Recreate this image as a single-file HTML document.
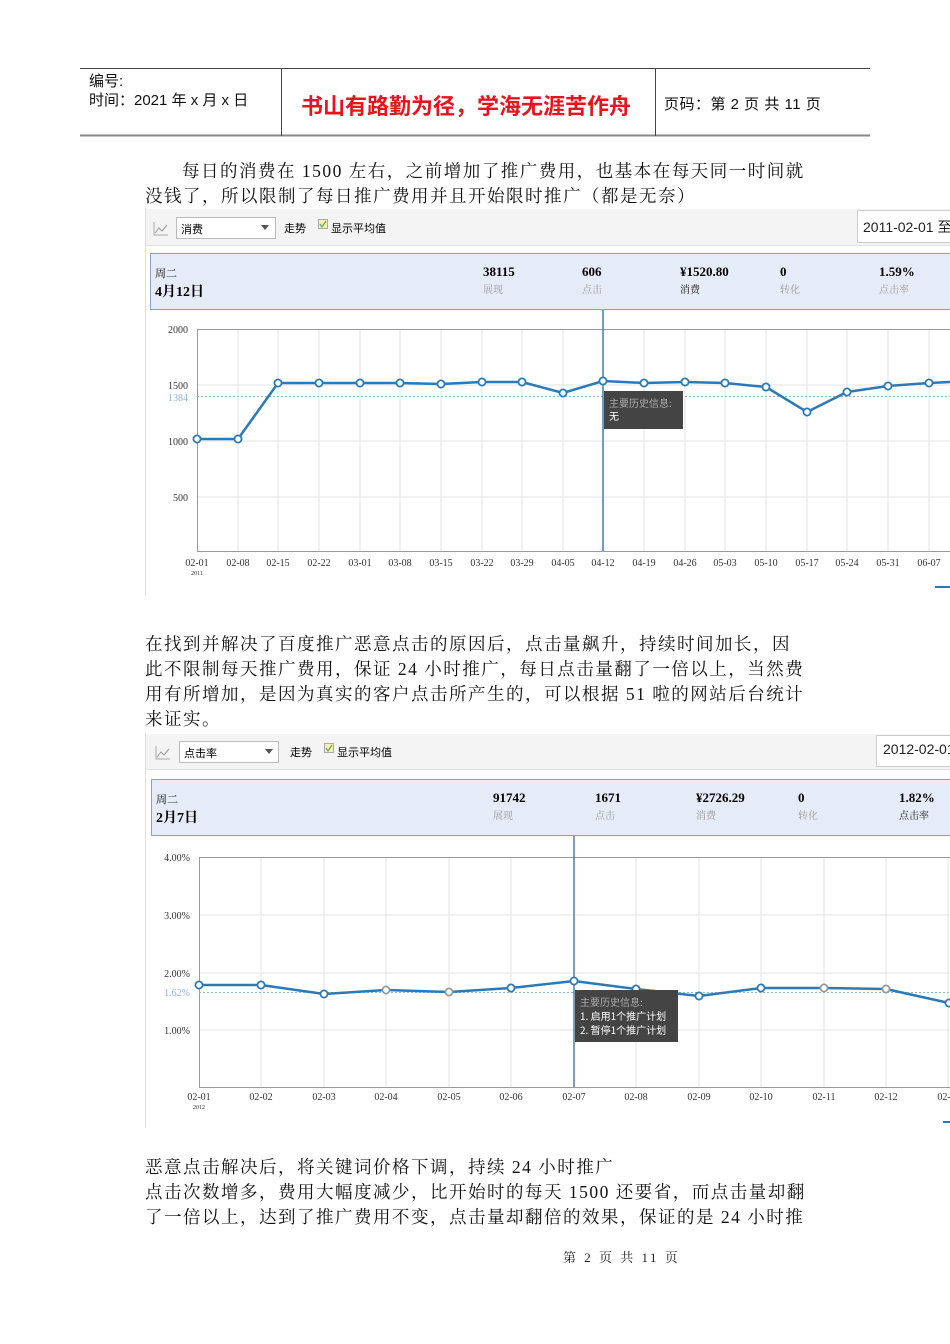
<!DOCTYPE html>
<html><head><meta charset="utf-8"><style>
body{margin:0;background:#fff;width:950px;height:1344px;position:relative;overflow:hidden;font-family:"Liberation Serif","Noto Serif CJK SC",serif;}
.a{position:absolute;white-space:nowrap;}
.s{font-family:"Liberation Sans","Noto Sans CJK SC",sans-serif;}
.p{font-size:17.5px;color:#111;line-height:25px;letter-spacing:1.5px;}
</style></head><body>
<svg class="a" style="left:0;top:0" width="950" height="1344" xmlns="http://www.w3.org/2000/svg" font-family="Liberation Serif, Noto Serif CJK SC, serif">
<line x1="80" y1="68.5" x2="870" y2="68.5" stroke="#444"/>
<line x1="80" y1="135.5" x2="870" y2="135.5" stroke="#888" stroke-width="2"/>
<line x1="281.5" y1="68" x2="281.5" y2="136" stroke="#444"/>
<line x1="655.5" y1="68" x2="655.5" y2="136" stroke="#444"/>

<rect x="145" y="208" width="805" height="388" fill="#fff"/>
<line x1="145.5" y1="208" x2="145.5" y2="596" stroke="#ddd"/>
<rect x="146" y="209" width="804" height="36" fill="#f4f4f4"/>
<line x1="146" y1="245.5" x2="950" y2="245.5" stroke="#e2e2e2"/>
<rect x="176.5" y="217.5" width="99" height="21" fill="#fff" stroke="#bbb"/>
<path d="M261 225h8l-4 5z" fill="#555"/>
<path d="M155 233l4-5 3 3 5-6" stroke="#999" fill="none"/><path d="M154 222v13h14" stroke="#aaa" fill="none"/>
<rect x="318.5" y="219.5" width="9" height="9" fill="#f6efb0" stroke="#aaa"/>
<path d="M320 224l2 3 4-6" stroke="#6a6" fill="none" stroke-width="1.3"/>
<rect x="857.5" y="210.5" width="100" height="32" fill="#fff" stroke="#ccc"/>
<rect x="150.5" y="253.5" width="805" height="56" fill="#e6ebf8" stroke="#8aa0cc"/>
<g stroke="#e3e3e3">
<line x1="197" y1="385" x2="950" y2="385"/><line x1="197" y1="441" x2="950" y2="441"/><line x1="197" y1="497" x2="950" y2="497"/>
<line x1="238" y1="329" x2="238" y2="551"/><line x1="278" y1="329" x2="278" y2="551"/><line x1="319" y1="329" x2="319" y2="551"/><line x1="360" y1="329" x2="360" y2="551"/><line x1="400" y1="329" x2="400" y2="551"/><line x1="441" y1="329" x2="441" y2="551"/><line x1="482" y1="329" x2="482" y2="551"/><line x1="522" y1="329" x2="522" y2="551"/><line x1="563" y1="329" x2="563" y2="551"/><line x1="644" y1="329" x2="644" y2="551"/><line x1="685" y1="329" x2="685" y2="551"/><line x1="725" y1="329" x2="725" y2="551"/><line x1="766" y1="329" x2="766" y2="551"/><line x1="807" y1="329" x2="807" y2="551"/><line x1="847" y1="329" x2="847" y2="551"/><line x1="888" y1="329" x2="888" y2="551"/><line x1="929" y1="329" x2="929" y2="551"/>
</g>
<line x1="197" y1="329.5" x2="950" y2="329.5" stroke="#999"/>
<line x1="197.5" y1="329" x2="197.5" y2="552" stroke="#999"/>
<line x1="197" y1="551.5" x2="950" y2="551.5" stroke="#999"/>
<line x1="197" y1="396.5" x2="950" y2="396.5" stroke="#8ab4e0" stroke-dasharray="2,2"/>
<line x1="603" y1="310" x2="603" y2="551" stroke="#3a7fc0" stroke-width="1.5"/>
<polyline points="197,439 238,439 278,383 319,383 360,383 400,383 441,384 482,382 522,382 563,393 603,381 644,383 685,382 725,383 766,387 807,412 847,392 888,386 929,383 950,382" fill="none" stroke="#2a7ab8" stroke-width="2.5"/>
<g fill="#fff" stroke="#2a7ab8" stroke-width="1.8">
<circle cx="197" cy="439" r="3.6"/><circle cx="238" cy="439" r="3.6"/><circle cx="278" cy="383" r="3.6"/><circle cx="319" cy="383" r="3.6"/><circle cx="360" cy="383" r="3.6"/><circle cx="400" cy="383" r="3.6"/><circle cx="441" cy="384" r="3.6"/><circle cx="482" cy="382" r="3.6"/><circle cx="522" cy="382" r="3.6"/><circle cx="563" cy="393" r="3.6"/><circle cx="603" cy="381" r="3.6"/><circle cx="644" cy="383" r="3.6"/><circle cx="685" cy="382" r="3.6"/><circle cx="725" cy="383" r="3.6"/><circle cx="766" cy="387" r="3.6"/><circle cx="807" cy="412" r="3.6"/><circle cx="847" cy="392" r="3.6"/><circle cx="888" cy="386" r="3.6"/><circle cx="929" cy="383" r="3.6"/>
</g>
<rect x="604" y="391" width="79" height="38" fill="#444"/>
<text x="609" y="407" font-size="10" fill="#aaa" font-family="Noto Sans CJK SC,sans-serif">主要历史信息:</text>
<text x="609" y="420" font-size="10" fill="#fff" font-family="Noto Sans CJK SC,sans-serif">无</text>
<g font-size="10" fill="#333" text-anchor="end">
<text x="188" y="333">2000</text><text x="188" y="389">1500</text><text x="188" y="401" fill="#8ab4e0">1384</text><text x="188" y="445">1000</text><text x="188" y="501">500</text>
</g>
<g font-size="10" fill="#333" text-anchor="middle">
<text x="197" y="566">02-01</text><text x="238" y="566">02-08</text><text x="278" y="566">02-15</text><text x="319" y="566">02-22</text><text x="360" y="566">03-01</text><text x="400" y="566">03-08</text><text x="441" y="566">03-15</text><text x="482" y="566">03-22</text><text x="522" y="566">03-29</text><text x="563" y="566">04-05</text><text x="603" y="566">04-12</text><text x="644" y="566">04-19</text><text x="685" y="566">04-26</text><text x="725" y="566">05-03</text><text x="766" y="566">05-10</text><text x="807" y="566">05-17</text><text x="847" y="566">05-24</text><text x="888" y="566">05-31</text><text x="929" y="566">06-07</text>
<text x="197" y="575" font-size="6">2011</text>
</g>
<line x1="935" y1="587" x2="950" y2="587" stroke="#2a7ab8" stroke-width="2"/>

<line x1="145.5" y1="733" x2="145.5" y2="1128" stroke="#ddd"/>
<rect x="146" y="734" width="804" height="35" fill="#f4f4f4"/>
<line x1="146" y1="769.5" x2="950" y2="769.5" stroke="#e2e2e2"/>
<rect x="179.5" y="741.5" width="99" height="21" fill="#fff" stroke="#bbb"/>
<path d="M265 749h8l-4 5z" fill="#555"/>
<path d="M157 757l4-5 3 3 5-6" stroke="#999" fill="none"/><path d="M156 746v13h14" stroke="#aaa" fill="none"/>
<rect x="324.5" y="743.5" width="9" height="9" fill="#f6efb0" stroke="#aaa"/>
<path d="M326 748l2 3 4-6" stroke="#6a6" fill="none" stroke-width="1.3"/>
<rect x="876.5" y="735.5" width="90" height="31" fill="#fff" stroke="#ccc"/>
<rect x="151.5" y="779.5" width="805" height="56" fill="#e6ebf8" stroke="#8aa0cc"/>
<g stroke="#e3e3e3">
<line x1="199" y1="915" x2="950" y2="915"/><line x1="199" y1="973" x2="950" y2="973"/><line x1="199" y1="1030" x2="950" y2="1030"/>
<line x1="261" y1="857" x2="261" y2="1087"/><line x1="324" y1="857" x2="324" y2="1087"/><line x1="386" y1="857" x2="386" y2="1087"/><line x1="449" y1="857" x2="449" y2="1087"/><line x1="511" y1="857" x2="511" y2="1087"/><line x1="636" y1="857" x2="636" y2="1087"/><line x1="699" y1="857" x2="699" y2="1087"/><line x1="761" y1="857" x2="761" y2="1087"/><line x1="824" y1="857" x2="824" y2="1087"/><line x1="886" y1="857" x2="886" y2="1087"/><line x1="948" y1="857" x2="948" y2="1087"/>
</g>
<line x1="199" y1="857.5" x2="950" y2="857.5" stroke="#999"/>
<line x1="199.5" y1="857" x2="199.5" y2="1088" stroke="#999"/>
<line x1="199" y1="1087.5" x2="950" y2="1087.5" stroke="#999"/>
<line x1="199" y1="992.5" x2="950" y2="992.5" stroke="#8ab4e0" stroke-dasharray="2,2"/>
<line x1="574" y1="836" x2="574" y2="1087" stroke="#2a6f9f" stroke-width="1.3"/>
<polyline points="199,985 261,985 324,994 386,990 449,992 511,988 574,981 636,989 699,996 761,988 824,988 886,989 949,1003" fill="none" stroke="#2a7ab8" stroke-width="2.5"/>
<g fill="#fff" stroke-width="1.8">
<circle cx="199" cy="985" r="3.6" stroke="#2a7ab8"/><circle cx="261" cy="985" r="3.6" stroke="#2a7ab8"/><circle cx="324" cy="994" r="3.6" stroke="#2a7ab8"/><circle cx="386" cy="990" r="3.6" stroke="#999"/><circle cx="449" cy="992" r="3.6" stroke="#999"/><circle cx="511" cy="988" r="3.6" stroke="#2a7ab8"/><circle cx="574" cy="981" r="3.6" stroke="#2a7ab8"/><circle cx="636" cy="989" r="3.6" stroke="#2a7ab8"/><circle cx="699" cy="996" r="3.6" stroke="#2a7ab8"/><circle cx="761" cy="988" r="3.6" stroke="#2a7ab8"/><circle cx="824" cy="988" r="3.6" stroke="#999"/><circle cx="886" cy="989" r="3.6" stroke="#999"/><circle cx="949" cy="1003" r="3.6" stroke="#2a7ab8"/>
</g>
<rect x="575" y="990" width="103" height="52" fill="#444"/>
<g font-size="10" font-family="Noto Sans CJK SC,sans-serif">
<text x="580" y="1006" fill="#aaa">主要历史信息:</text>
<text x="580" y="1020" fill="#fff">1. 启用1个推广计划</text>
<text x="580" y="1034" fill="#fff">2. 暂停1个推广计划</text>
</g>
<g font-size="10" fill="#333" text-anchor="end">
<text x="190" y="861">4.00%</text><text x="190" y="919">3.00%</text><text x="190" y="977">2.00%</text><text x="190" y="996" fill="#8ab4e0">1.62%</text><text x="190" y="1034">1.00%</text>
</g>
<g font-size="10" fill="#333" text-anchor="middle">
<text x="199" y="1100">02-01</text><text x="261" y="1100">02-02</text><text x="324" y="1100">02-03</text><text x="386" y="1100">02-04</text><text x="449" y="1100">02-05</text><text x="511" y="1100">02-06</text><text x="574" y="1100">02-07</text><text x="636" y="1100">02-08</text><text x="699" y="1100">02-09</text><text x="761" y="1100">02-10</text><text x="824" y="1100">02-11</text><text x="886" y="1100">02-12</text><text x="949" y="1100">02-13</text>
<text x="199" y="1109" font-size="6">2012</text>
</g>
<line x1="943" y1="1122" x2="950" y2="1122" stroke="#2a7ab8" stroke-width="2"/>
</svg>

<div class="a s" style="left:89px;top:70px;font-size:15px;color:#111">编号:</div>
<div class="a s" style="left:89px;top:89px;font-size:15px;color:#111">时间：2021 年 x 月 x 日</div>
<div class="a s" style="left:301px;top:89px;font-size:22px;color:#e8141b;font-weight:bold">书山有路勤为径，学海无涯苦作舟</div>
<div class="a s" style="left:664px;top:93px;font-size:15px;color:#111;letter-spacing:0.5px">页码：第 2 页  共 11 页</div>

<div class="a p" style="left:182px;top:159px">每日的消费在 1500 左右，之前增加了推广费用，也基本在每天同一时间就</div>
<div class="a p" style="left:145px;top:184px">没钱了，所以限制了每日推广费用并且开始限时推广（都是无奈）</div>

<div class="a s" style="left:181px;top:221px;font-size:11px">消费</div>
<div class="a s" style="left:284px;top:220px;font-size:11px">走势</div>
<div class="a s" style="left:331px;top:220px;font-size:11px">显示平均值</div>
<div class="a s" style="left:863px;top:217px;font-size:14px;color:#222">2011-02-01 至</div>
<div class="a" style="left:155px;top:265px;font-size:11px">周二</div>
<div class="a" style="left:155px;top:281px;font-size:14px;font-weight:bold">4月12日</div>
<div class="a" style="left:483px;top:264px;font-size:13px;font-weight:bold">38115</div><div class="a" style="left:483px;top:281px;font-size:10px;color:#999">展现</div>
<div class="a" style="left:582px;top:264px;font-size:13px;font-weight:bold">606</div><div class="a" style="left:582px;top:281px;font-size:10px;color:#999">点击</div>
<div class="a" style="left:680px;top:264px;font-size:13px;font-weight:bold">¥1520.80</div><div class="a" style="left:680px;top:281px;font-size:10px;color:#111">消费</div>
<div class="a" style="left:780px;top:264px;font-size:13px;font-weight:bold">0</div><div class="a" style="left:780px;top:281px;font-size:10px;color:#999">转化</div>
<div class="a" style="left:879px;top:264px;font-size:13px;font-weight:bold">1.59%</div><div class="a" style="left:879px;top:281px;font-size:10px;color:#999">点击率</div>

<div class="a p" style="left:145px;top:632px">在找到并解决了百度推广恶意点击的原因后，点击量飙升，持续时间加长，因</div>
<div class="a p" style="left:145px;top:657px">此不限制每天推广费用，保证 24 小时推广，每日点击量翻了一倍以上，当然费</div>
<div class="a p" style="left:145px;top:682px">用有所增加，是因为真实的客户点击所产生的，可以根据 51 啦的网站后台统计</div>
<div class="a p" style="left:145px;top:707px">来证实。</div>

<div class="a s" style="left:184px;top:745px;font-size:11px">点击率</div>
<div class="a s" style="left:290px;top:744px;font-size:11px">走势</div>
<div class="a s" style="left:337px;top:744px;font-size:11px">显示平均值</div>
<div class="a s" style="left:883px;top:741px;font-size:14px;color:#222">2012-02-01</div>
<div class="a" style="left:156px;top:791px;font-size:11px">周二</div>
<div class="a" style="left:156px;top:807px;font-size:14px;font-weight:bold">2月7日</div>
<div class="a" style="left:493px;top:790px;font-size:13px;font-weight:bold">91742</div><div class="a" style="left:493px;top:807px;font-size:10px;color:#999">展现</div>
<div class="a" style="left:595px;top:790px;font-size:13px;font-weight:bold">1671</div><div class="a" style="left:595px;top:807px;font-size:10px;color:#999">点击</div>
<div class="a" style="left:696px;top:790px;font-size:13px;font-weight:bold">¥2726.29</div><div class="a" style="left:696px;top:807px;font-size:10px;color:#999">消费</div>
<div class="a" style="left:798px;top:790px;font-size:13px;font-weight:bold">0</div><div class="a" style="left:798px;top:807px;font-size:10px;color:#999">转化</div>
<div class="a" style="left:899px;top:790px;font-size:13px;font-weight:bold">1.82%</div><div class="a" style="left:899px;top:807px;font-size:10px;color:#111">点击率</div>

<div class="a p" style="left:145px;top:1155px">恶意点击解决后，将关键词价格下调，持续 24 小时推广</div>
<div class="a p" style="left:145px;top:1180px">点击次数增多，费用大幅度减少，比开始时的每天 1500 还要省，而点击量却翻</div>
<div class="a p" style="left:145px;top:1205px">了一倍以上，达到了推广费用不变，点击量却翻倍的效果，保证的是 24 小时推</div>

<div class="a" style="left:563px;top:1247px;font-size:13px;color:#222;letter-spacing:2.5px">第 2 页 共 11 页</div>
</body></html>
